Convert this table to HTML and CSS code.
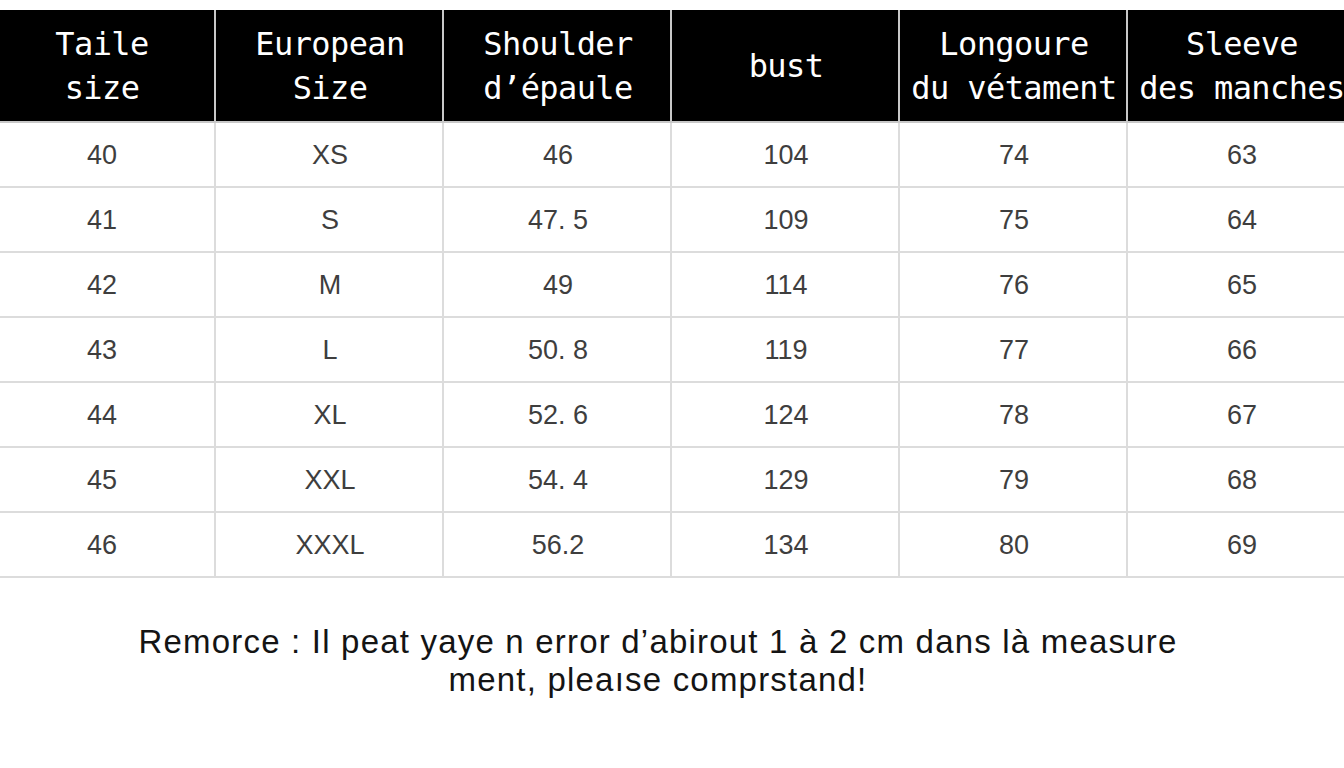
FILE: index.html
```html
<!DOCTYPE html>
<html lang="fr">
<head>
<meta charset="utf-8">
<title>Size chart</title>
<link rel="stylesheet" href="styles.css">
</head>
<body>
<div class="page">
  <div class="chart">
    <div class="row head">
      <div class="cell">Taile<br>size</div>
      <div class="cell">European<br>Size</div>
      <div class="cell">Shoulder<br>d’épaule</div>
      <div class="cell">bust</div>
      <div class="cell">Longoure<br>du vétament</div>
      <div class="cell">Sleeve<br>des manches</div>
    </div>
    <div class="row"><div class="cell">40</div><div class="cell">XS</div><div class="cell">46</div><div class="cell">104</div><div class="cell">74</div><div class="cell">63</div></div>
    <div class="row"><div class="cell">41</div><div class="cell">S</div><div class="cell">47. 5</div><div class="cell">109</div><div class="cell">75</div><div class="cell">64</div></div>
    <div class="row"><div class="cell">42</div><div class="cell">M</div><div class="cell">49</div><div class="cell">114</div><div class="cell">76</div><div class="cell">65</div></div>
    <div class="row"><div class="cell">43</div><div class="cell">L</div><div class="cell">50. 8</div><div class="cell">119</div><div class="cell">77</div><div class="cell">66</div></div>
    <div class="row"><div class="cell">44</div><div class="cell">XL</div><div class="cell">52. 6</div><div class="cell">124</div><div class="cell">78</div><div class="cell">67</div></div>
    <div class="row"><div class="cell">45</div><div class="cell">XXL</div><div class="cell">54. 4</div><div class="cell">129</div><div class="cell">79</div><div class="cell">68</div></div>
    <div class="row"><div class="cell">46</div><div class="cell">XXXL</div><div class="cell">56.2</div><div class="cell">134</div><div class="cell">80</div><div class="cell">69</div></div>
  </div>
  <p class="note">Remorce : Il peat yaye n error d’abirout 1 à 2 cm dans là measure<br>ment, pleaıse comprstand!</p>
</div>
</body>
</html>
```
FILE: styles.css
```css
html, body {
  margin: 0;
  padding: 0;
  background: #ffffff;
}
body {
  width: 1344px;
  height: 768px;
  overflow: hidden;
}
.page {
  padding-top: 10px;
}
.chart {
  width: 1368px;
  margin-left: -12px;
}
.row {
  display: grid;
  grid-template-columns: repeat(6, 228px);
  height: 65px;
}
.cell {
  box-sizing: border-box;
  border-right: 2px solid #dcdcdc;
  border-bottom: 2px solid #dcdcdc;
  display: flex;
  align-items: center;
  justify-content: center;
  text-align: center;
  font-family: "Liberation Sans", Arial, sans-serif;
  font-size: 27px;
  color: #3e3e3e;
  padding-top: 1px;
  padding-left: 2px;
}
.head {
  height: 113px;
}
.head .cell {
  background: #000000;
  color: #ffffff;
  font-family: "DejaVu Sans Mono", "Liberation Mono", monospace;
  font-size: 32px;
  letter-spacing: -0.6px;
  line-height: 44px;
  border-right: 2px solid #c8c8c8;
  border-bottom: 2px solid #c8c8c8;
  padding-top: 0;
  padding-left: 2px;
}
.note {
  margin: 45px 0 0 0;
  text-align: center;
  font-family: "Liberation Sans", Arial, sans-serif;
  font-size: 33px;
  line-height: 38px;
  letter-spacing: 1.2px;
  color: #141414;
  padding-right: 28px;
}
```
